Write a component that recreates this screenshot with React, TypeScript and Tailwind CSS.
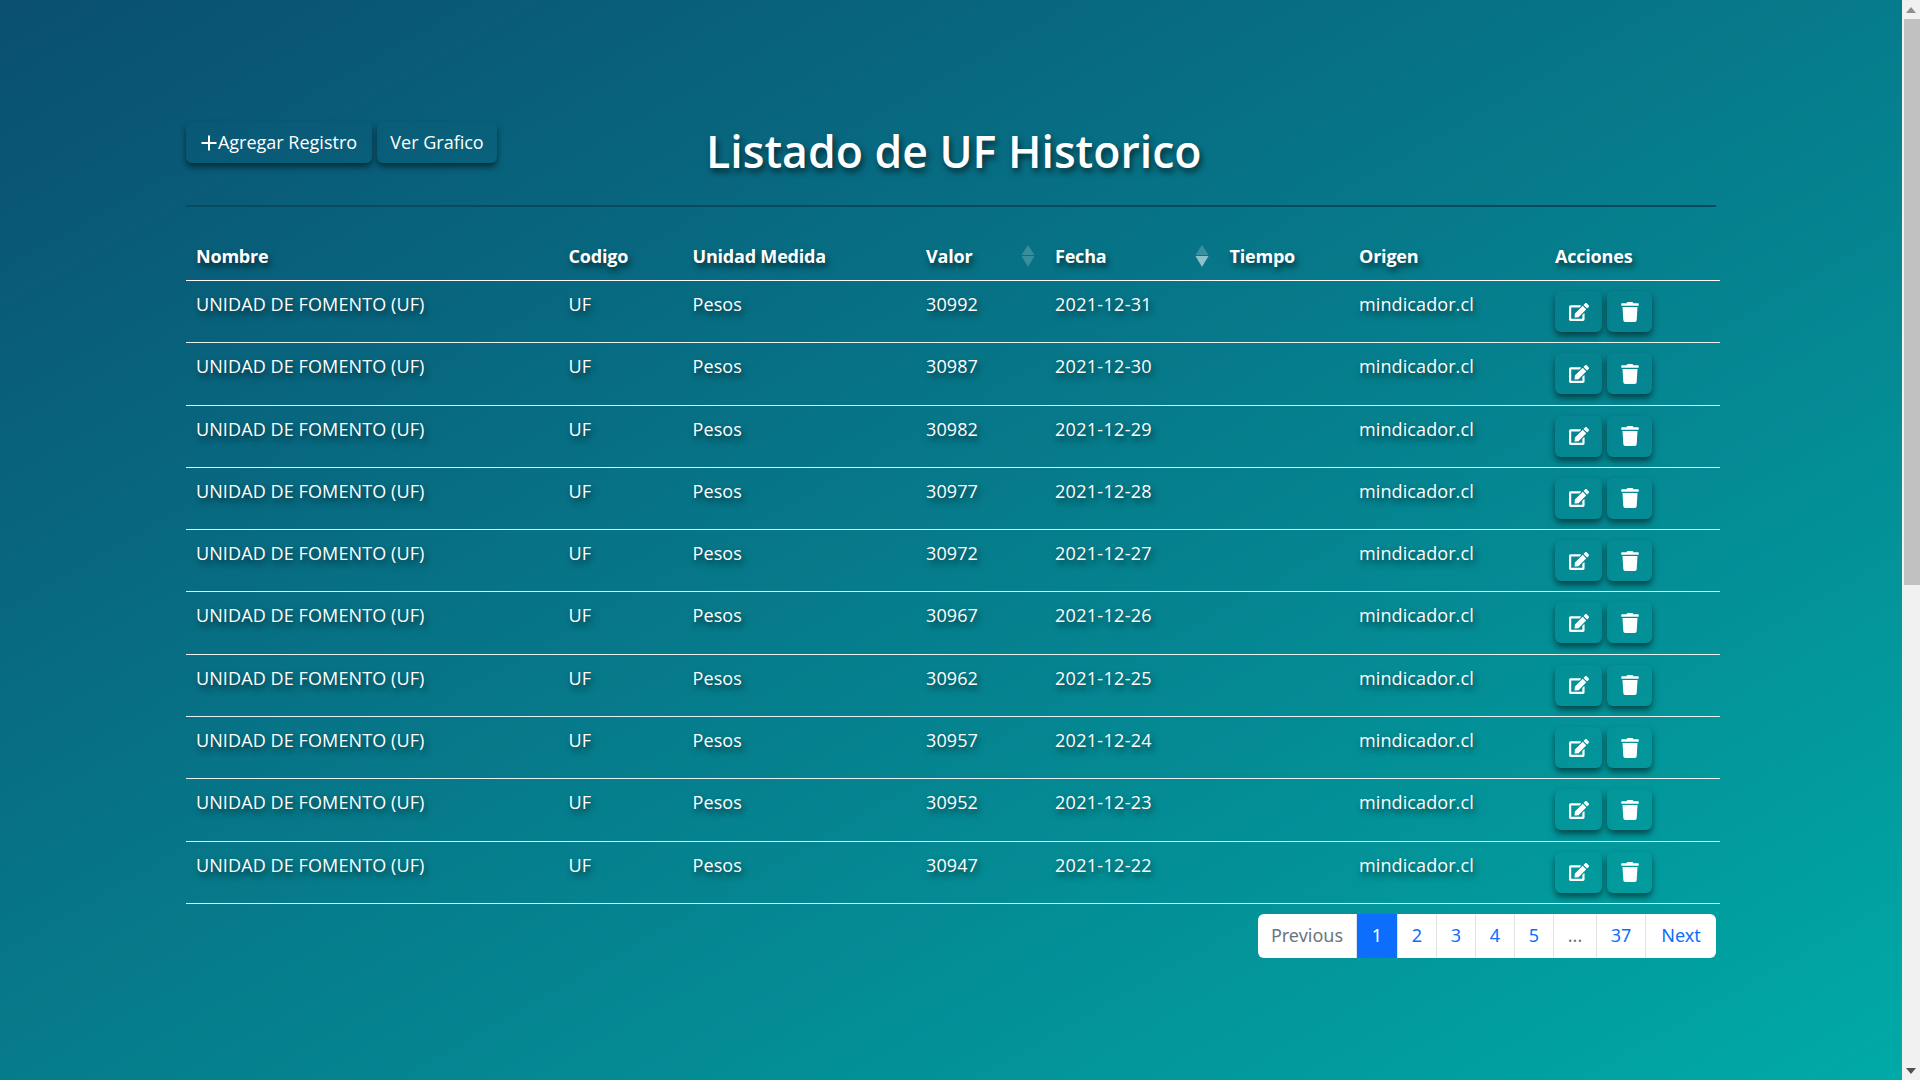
import { FaEdit, FaTrash } from "react-icons/fa";

const dates = ["31", "30", "29", "28", "27", "26", "25", "24", "23", "22"];
const shadow = "[text-shadow:2px_4px_6px_rgba(0,0,0,0.6)]";
const btnShadow = "shadow-[0_4px_6px_rgba(0,0,0,0.5)]";
const cell = "px-[10px] pt-[10px] align-top leading-[27px] tracking-[0.1px] [text-shadow:2px_4px_6px_rgba(0,0,0,0.6)]";

function Sort({ active }: { active?: boolean }) {
  return (
    <svg width="14" height="22" viewBox="0 0 14 22" className="absolute right-[10.5px] top-[12px]">
      <polygon points="7,0 13.5,10 0.5,10" fill="#fff" opacity="0.2" />
      <polygon points="7,22 13.5,11 0.5,11" fill="#fff" opacity={active ? 0.55 : 0.2} />
    </svg>
  );
}

function PageCell({ label, w, cls }: { label: string; w: string; cls: string }) {
  return (
    <div className={`flex items-center justify-center border-r border-[#dee2e6] last:border-r-0 ${w} ${cls}`}>{label}</div>
  );
}

export default function App() {
  const headers = [
    ["Nombre", "w-[372.5px]"],
    ["Codigo", "w-[124px]"],
    ["Unidad Medida", "w-[233.5px]"],
    ["Valor", "w-[129px]"],
    ["Fecha", "w-[174.5px]"],
    ["Tiempo", "w-[129.5px]"],
    ["Origen", "w-[196px]"],
    ["Acciones", "w-[175px]"],
  ];
  return (
    <div className="flex h-[1080px] w-full overflow-hidden font-['Open_Sans',sans-serif] text-[18px] text-white">
      <main className="h-full w-[1902px] bg-gradient-to-br from-[#0a4f70] to-[#00aaa6] pl-[186px] pt-[122px]">
        <div className="w-[1530px]">
          <div className="flex h-[85px] items-start border-b-2 border-[#0a4a5e]">
            <div className="flex gap-[5px]">
              <button className={`flex h-[41px] w-[186px] items-center justify-center gap-[1px] rounded-[6px] ${btnShadow}`}>
                <svg width="16" height="16" viewBox="0 0 16 16" className="shrink-0">
                  <path d="M8 0.5V15.5M0.5 8H15.5" stroke="#fff" strokeWidth="2" />
                </svg>
                Agregar Registro
              </button>
              <button className={`flex h-[41px] w-[120px] items-center justify-center rounded-[6px] ${btnShadow}`}>
                Ver Grafico
              </button>
            </div>
            <h1 className={`ml-[209px] mt-[-1px] text-[44.6px] font-semibold leading-[60px] ${shadow}`}>Listado de UF Historico</h1>
          </div>
          <table className="mt-[26px] w-[1534px] table-fixed border-collapse text-left">
            <thead>
              <tr className="border-b border-white">
                {headers.map(([h, w]) => (
                  <th key={h} className={`relative ${w} h-[47px] px-[10px] py-[10px] font-bold leading-[27px] tracking-[-0.2px] ${shadow}`}>
                    {h}
                    {h === "Valor" && <Sort />}
                    {h === "Fecha" && <Sort active />}
                  </th>
                ))}
              </tr>
            </thead>
            <tbody>
              {dates.map((d, i) => (
                <tr key={d} className="h-[62.3px] border-b border-[#e8f0f0]">
                  <td className={cell}>UNIDAD DE FOMENTO (UF)</td>
                  <td className={cell}>UF</td>
                  <td className={cell}>Pesos</td>
                  <td className={cell}>{30992 - i * 5}</td>
                  <td className={`${cell} tracking-[0.3px]`}>2021-12-{d}</td>
                  <td className="px-[10px] pt-[10px] align-top"></td>
                  <td className={cell}>mindicador.cl</td>
                  <td className="px-[10px] pt-[10px] align-top">
                    <div className="flex gap-[5px]">
                      <button className={`flex h-[41px] w-[47px] items-center justify-center rounded-[6px] ${btnShadow}`}><FaEdit size={20} /></button>
                      <button className={`flex h-[41px] w-[45px] items-center justify-center rounded-[6px] ${btnShadow}`}><FaTrash size={20} /></button>
                    </div>
                  </td>
                </tr>
              ))}
            </tbody>
          </table>
          <div className="mt-[10px] flex justify-end">
            <div className="flex h-[44px] overflow-hidden rounded-[6px] bg-white font-['Noto_Sans',sans-serif] text-[18px]">
              <PageCell label="Previous" w="w-[99px]" cls="text-[#6c757d]" />
              <PageCell label="1" w="w-[41px]" cls="bg-[#0d6efd] border-[#0d6efd] text-white" />
              <PageCell label="2" w="w-[39px]" cls="text-[#0d6efd]" />
              <PageCell label="3" w="w-[39px]" cls="text-[#0d6efd]" />
              <PageCell label="4" w="w-[39px]" cls="text-[#0d6efd]" />
              <PageCell label="5" w="w-[39px]" cls="text-[#0d6efd]" />
              <PageCell label="..." w="w-[43px]" cls="text-[#6c757d]" />
              <PageCell label="37" w="w-[49px]" cls="text-[#0d6efd]" />
              <PageCell label="Next" w="w-[70px]" cls="text-[#0d6efd]" />
            </div>
          </div>
        </div>
      </main>
      <aside className="flex h-full w-[18px] flex-col bg-[#f1f1f1]">
        <div className="flex h-[19px] items-center justify-center">
          <svg width="10" height="6" viewBox="0 0 10 6"><polygon points="5,0 10,6 0,6" fill="#8f8f8f" /></svg>
        </div>
        <div className="ml-[2px] h-[566px] bg-[#c1c1c1]" />
        <div className="flex-1" />
        <div className="flex h-[19px] items-center justify-center">
          <svg width="10" height="6" viewBox="0 0 10 6"><polygon points="0,0 10,0 5,6" fill="#505050" /></svg>
        </div>
      </aside>
    </div>
  );
}
